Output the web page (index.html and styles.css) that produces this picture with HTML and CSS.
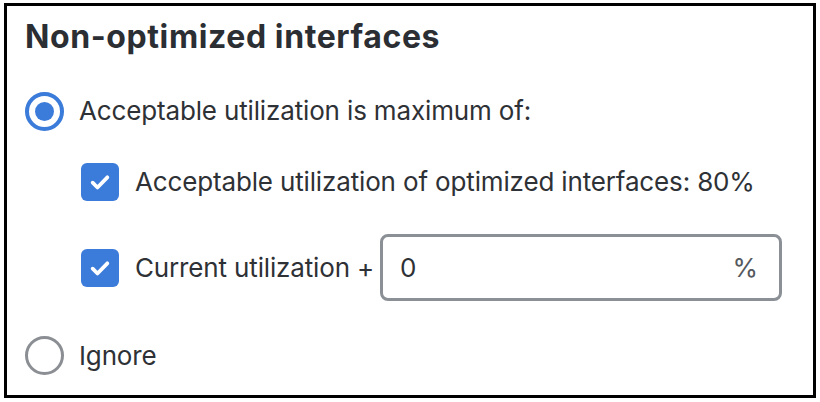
FILE: index.html
```html
<!DOCTYPE html>
<html>
<head>
<meta charset="utf-8">
<link rel="stylesheet" href="styles.css">
</head>
<body>
<div class="frame">
  <h2 class="title">Non-optimized interfaces</h2>
  <div class="row radio-row">
    <span class="radio checked"></span>
    <span class="label">Acceptable utilization is maximum of:</span>
  </div>
  <div class="row check-row first">
    <span class="checkbox"><svg viewBox="0 0 24 24" width="32" height="32"><path d="M6.5 12.5l3.6 3.6L17.5 8.5" fill="none" stroke="#fff" stroke-width="2.8" stroke-linecap="round" stroke-linejoin="round"/></svg></span>
    <span class="label">Acceptable utilization of optimized interfaces: 80%</span>
  </div>
  <div class="row check-row second">
    <span class="checkbox"><svg viewBox="0 0 24 24" width="32" height="32"><path d="M6.5 12.5l3.6 3.6L17.5 8.5" fill="none" stroke="#fff" stroke-width="2.8" stroke-linecap="round" stroke-linejoin="round"/></svg></span>
    <span class="label">Current utilization +</span>
    <div class="input">
      <span class="value">0</span>
      <span class="unit">%</span>
    </div>
  </div>
  <div class="row radio-row last">
    <span class="radio"></span>
    <span class="label">Ignore</span>
  </div>
</div>
</body>
</html>
```
FILE: styles.css
```css
html, body {
  margin: 0;
  padding: 0;
  background: #fff;
}
body {
  font-family: Inter, "Liberation Sans", Arial, sans-serif;
  color: #2b2e33;
}
.frame {
  box-sizing: border-box;
  margin: 3px 0 0 4px;
  width: 812px;
  height: 395px;
  border: 3px solid #000;
  padding: 11px 0 0 18px;
}
.title {
  margin: 0;
  font-size: 32px;
  line-height: 40px;
  font-weight: 700;
  letter-spacing: 0.6px;
  color: #2b2e33;
}
.row {
  display: flex;
  align-items: center;
}
.label {
  font-size: 26px;
  line-height: 30px;
  letter-spacing: -0.15px;
  color: #2e3135;
}
.radio-row {
  margin-top: 34px;
  height: 40px;
}
.radio-row .radio {
  margin-right: 15px;
}
.radio {
  box-sizing: border-box;
  width: 39px;
  height: 39px;
  border-radius: 50%;
  border: 3px solid #8b8f94;
  flex: none;
  display: flex;
  align-items: center;
  justify-content: center;
}
.radio.checked {
  border: 4px solid #3b7bd9;
}
.radio.checked::after {
  content: "";
  width: 19px;
  height: 19px;
  border-radius: 50%;
  background: #3b7bd9;
}
.check-row {
  margin-left: 56px;
}
.check-row.first {
  margin-top: 32px;
  height: 38px;
}
.check-row.second {
  margin-top: 33px;
  height: 67px;
}
.radio-row.last {
  margin-top: 35px;
  height: 39px;
}
.checkbox {
  box-sizing: border-box;
  width: 38px;
  height: 38px;
  border-radius: 6px;
  background: #3b7bd9;
  flex: none;
  display: flex;
  align-items: center;
  justify-content: center;
  margin-right: 16px;
}
.input {
  box-sizing: border-box;
  margin-left: 6px;
  width: 402px;
  height: 67px;
  border: 3px solid #8b9096;
  border-radius: 8px;
  display: flex;
  align-items: center;
  justify-content: space-between;
  padding: 0 21px 0 17px;
  font-size: 26px;
  color: #2e3135;
}
.unit {
  color: #55595e;
}
```
